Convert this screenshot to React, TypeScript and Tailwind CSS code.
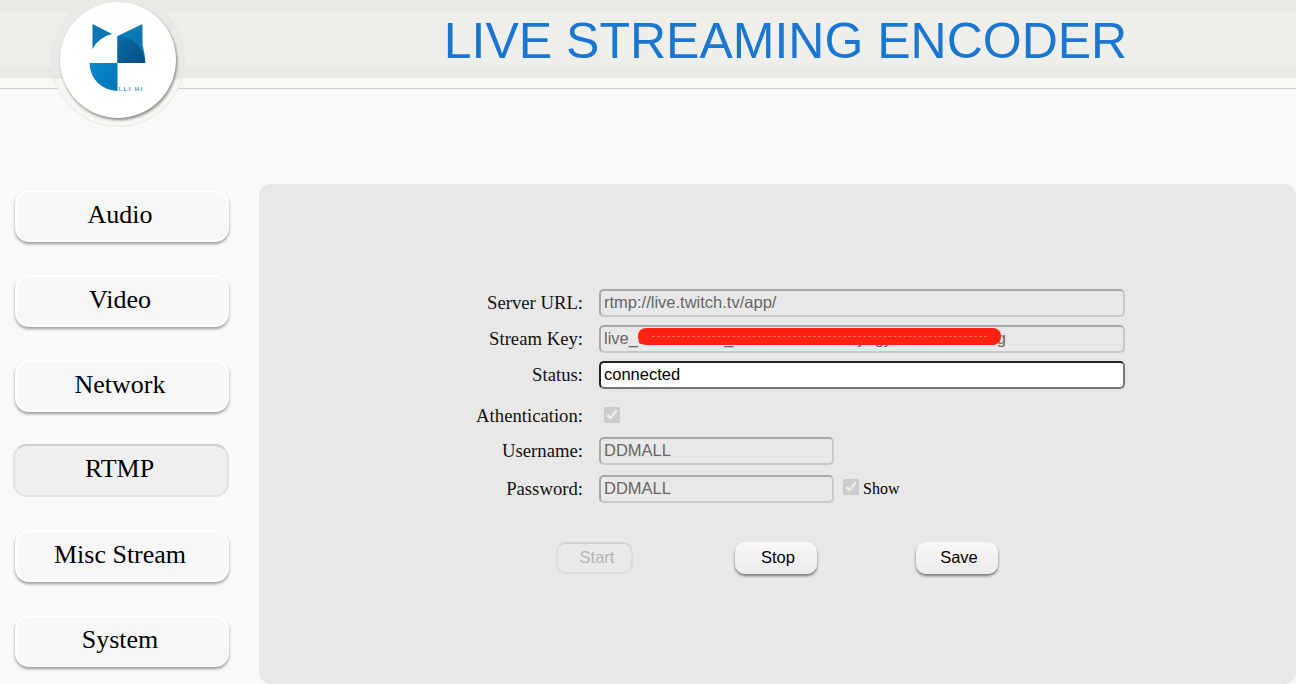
import React from "react";

const nav = ["Audio", "Video", "Network", "RTMP", "Misc Stream", "System"];

function Logo() {
  return (
    <div className="absolute left-[51px] top-[-7px] w-[134px] h-[134px] rounded-full bg-[linear-gradient(#e9e9e5_85px,#f7f7f3_85px)] border border-[#e8e8e3] flex items-center justify-center">
      <div className="w-[116px] h-[116px] rounded-full bg-white shadow-[1px_2px_3px_rgba(0,0,0,0.45)]">
        <svg width="116" height="116" viewBox="60 2 116 116">
          <defs>
            <linearGradient id="g1" x1="0" y1="0" x2="1" y2="1">
              <stop offset="0" stopColor="#0f80c0" />
              <stop offset="1" stopColor="#0a6fae" />
            </linearGradient>
            <linearGradient id="g3" x1="0" y1="0" x2="1" y2="1">
              <stop offset="0" stopColor="#0b6ba8" />
              <stop offset="1" stopColor="#00507f" />
            </linearGradient>
            <linearGradient id="g2" x1="0" y1="0" x2="1" y2="1">
              <stop offset="0" stopColor="#0b8ad0" />
              <stop offset="1" stopColor="#0073b5" />
            </linearGradient>
          </defs>
          <path d="M92.5 24 L112 34 Q99 37 92.5 49 Z" fill="#0a76b6" />
          <path d="M117.5 36 L142.5 24 L142.5 45 Q145 54 145.5 63 L117.5 63 Z" fill="url(#g1)" />
          <path d="M117.5 36 A27.5 27.5 0 0 1 145 63 L117.5 63 Z" fill="url(#g3)" />
          <path d="M89.5 63 L117.5 63 L117.5 91 A28 28 0 0 1 89.5 63 Z" fill="url(#g2)" />
          <text x="118.5" y="90.5" fontSize="6" fontWeight="700" fontFamily="Liberation Sans, sans-serif" letterSpacing="1.4" fill="#2f8fcf">LLI HI</text>
        </svg>
      </div>
    </div>
  );
}

function Row({ label, children, className = "" }: { label: string; children: React.ReactNode; className?: string }) {
  return (
    <div className={"flex items-center " + className}>
      <label className="w-[324px] text-right text-[18.7px] text-[#111] leading-none">{label}</label>
      <div className="ml-4 flex items-center relative">{children}</div>
    </div>
  );
}

const disabledInput =
  "h-[28px] rounded-[5px] border-2 border-t-[#a9a9a9] border-l-[#a9a9a9] border-r-[#c8c8c8] border-b-[#c8c8c8] bg-[#e8e8e8] px-[3px] pb-[2px] text-[16.5px] text-[#666] font-['Liberation_Sans',sans-serif] outline-none";

export default function App() {
  return (
    <div className="w-[1296px] h-[684px] overflow-hidden bg-[#f9f9f9] font-['Liberation_Serif',serif]">
      <header className="relative h-[89px] bg-[#f8f8f5] border-b border-[#cfcfc9]">
        <div className="h-[78px] bg-[#eeeeeb] border-t-[12px] border-b-[11px] border-[#e8e8e4] flex items-center justify-center pl-[275px]">
          <h1 className="text-[50px] leading-none font-['Liberation_Sans',sans-serif] text-[#1b76d2] mt-[2px]">
            LIVE STREAMING ENCODER
          </h1>
        </div>
        <Logo />
      </header>
      <div className="flex">
        <nav className="w-[259px] shrink-0 pt-[101px] pl-[15px] flex flex-col gap-[33px]">
          {nav.map((n) =>
            n === "RTMP" ? (
              <button
                key={n}
                className="w-[216px] -ml-[2px] h-[53px] -mt-[1px] pr-[3px] pb-[3px] rounded-[14px] bg-[#efefef] border-2 border-[#e2e2e2] border-t-[#cfcfcf] text-[26px] text-black leading-none"
              >
                {n}
              </button>
            ) : (
              <button
                key={n}
                className="w-[214px] h-[52px] pr-[4px] pb-[3px] rounded-[14px] bg-[#f7f7f7] border-2 border-[#fefefe] shadow-[0_2px_3px_rgba(0,0,0,0.38)] text-[26px] text-black leading-none"
              >
                {n}
              </button>
            )
          )}
        </nav>
        <main className="mt-[95px] w-[1037px] h-[500px] rounded-[12px] bg-[#e8e8e8] pt-[105px]">
          <Row label="Server URL:" className="mb-2">
            <input readOnly disabled value="rtmp://live.twitch.tv/app/" className={disabledInput + " w-[526px]"} />
          </Row>
          <Row label="Stream Key:" className="mb-2">
            <input
              readOnly
              disabled
              value="live_aaaaaaaaai_aaaaaaaaaaaaatyagyaaaaaaaaaaaig"
              className={disabledInput + " w-[526px]"}
            />
            <div className="absolute left-[39px] top-[3px] w-[363px] h-[17px] rounded-[8px] bg-[#ff2213] flex items-center px-[14px]">
              <div className="w-full border-t border-dashed border-[#ff6a5e]" />
            </div>
          </Row>
          <Row label="Status:" className="mb-[15px]">
            <input
              readOnly
              value="connected"
              className="w-[526px] h-[28px] rounded-[5px] border-2 border-t-[#222] border-l-[#222] border-r-[#767676] border-b-[#767676] bg-white px-[3px] pb-[2px] text-[16.5px] text-black font-['Liberation_Sans',sans-serif] outline-none"
            />
          </Row>
          <Row label="Athentication:" className="mb-[9px] h-[24px]">
            <input type="checkbox" checked disabled readOnly className="w-4 h-4 ml-[5px] mb-[2px]" />
          </Row>
          <Row label="Username:" className="mb-[10px]">
            <input readOnly disabled value="DDMALL" className={disabledInput + " w-[235px] text-[#5a6272]"} />
          </Row>
          <Row label="Password:">
            <input readOnly disabled value="DDMALL" className={disabledInput + " w-[235px] text-[#5a6272]"} />
            <input type="checkbox" checked disabled readOnly className="w-4 h-4 ml-[9px] mb-[5px]" />
            <span className="ml-[4px] text-[16px] text-black leading-none">Show</span>
          </Row>
          <div className="mt-[39px] ml-[297px] flex gap-[102px] font-['Liberation_Sans',sans-serif] text-[16.5px]">
            <button disabled className="w-[77px] h-[32px] mr-[-1px] pl-[5px] pb-[2px] rounded-[10px] bg-[#e9e9e9] border-2 border-[#dcdcdc] border-t-[#d2d2d2] text-[#b5b5b5]">
              Start
            </button>
            <button className="w-[82px] h-[32px] ml-[1px] pl-[4px] pb-[2px] rounded-[10px] bg-[linear-gradient(#f8f8f8,#ebebeb)] shadow-[0_2px_3px_rgba(0,0,0,0.5)] text-black">
              Stop
            </button>
            <button className="w-[82px] h-[32px] ml-[-3px] pl-[4px] pb-[2px] rounded-[10px] bg-[linear-gradient(#f8f8f8,#ebebeb)] shadow-[0_2px_3px_rgba(0,0,0,0.5)] text-black">
              Save
            </button>
          </div>
        </main>
      </div>
    </div>
  );
}
